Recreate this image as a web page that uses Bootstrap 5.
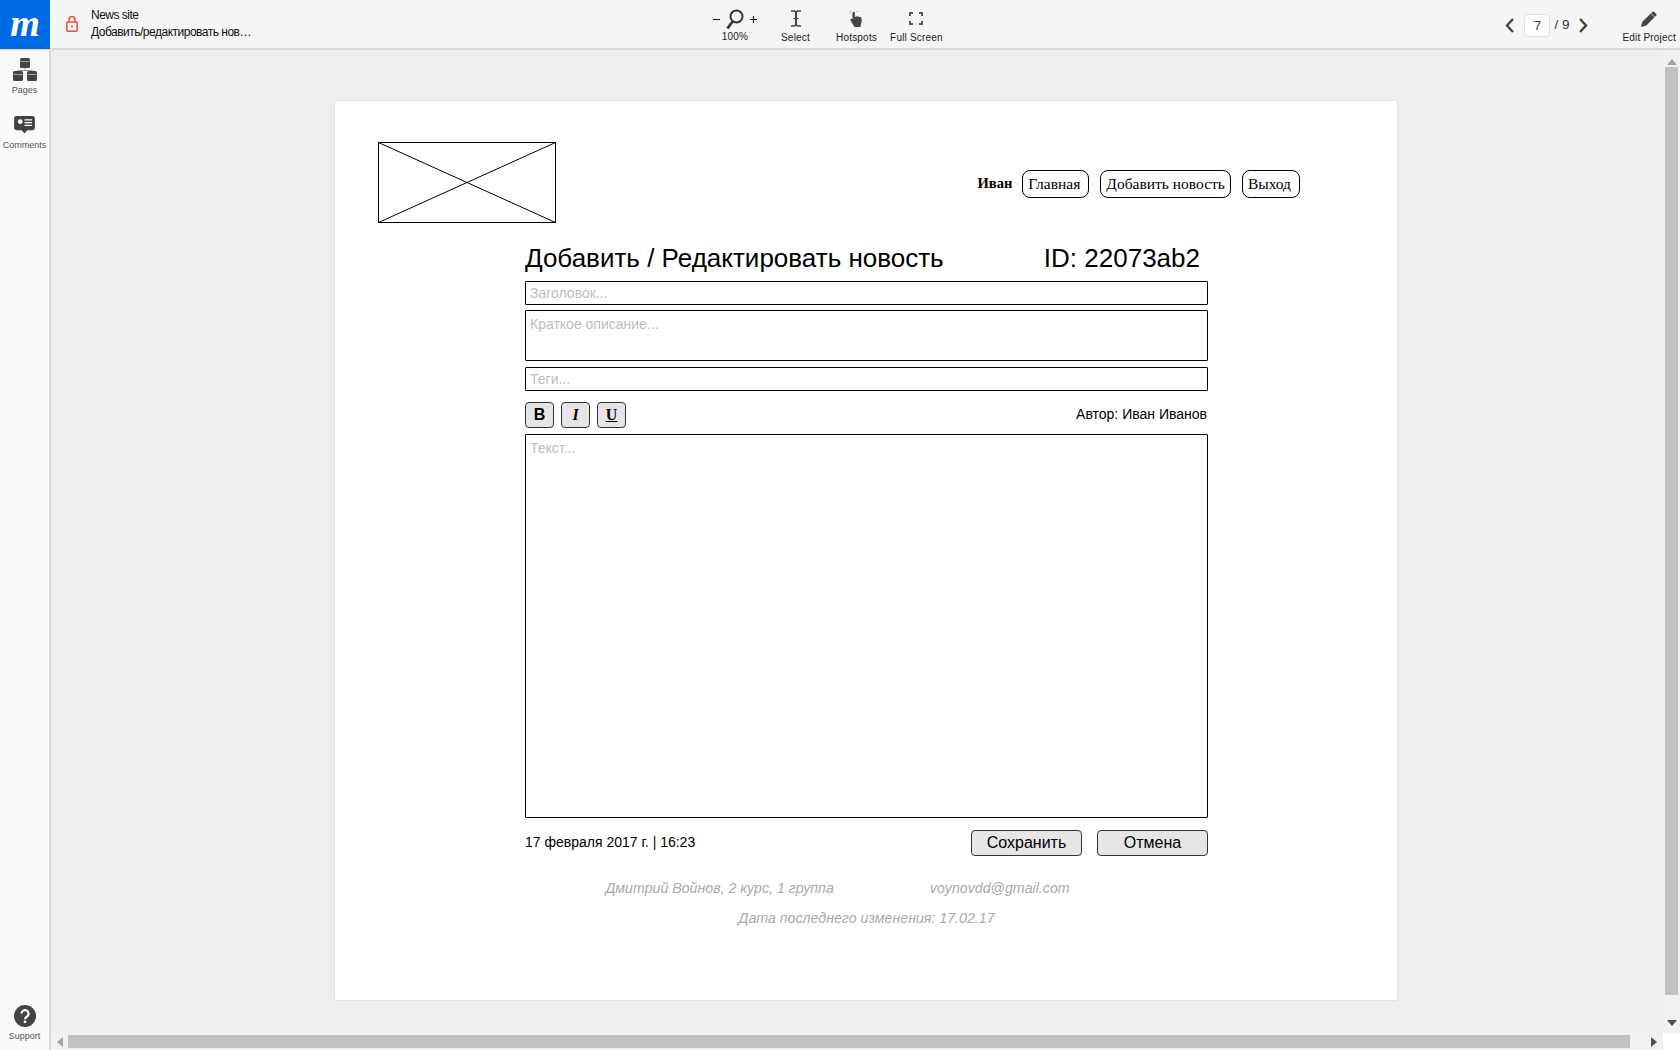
<!DOCTYPE html>
<html lang="en">
<head>
  <meta charset="UTF-8" />
  <title>News site</title>
  <link href="https://cdn.jsdelivr.net/npm/bootstrap@5.3.3/dist/css/bootstrap.min.css" rel="stylesheet" />
  <style>
    html, body { height: 100%; overflow: hidden; }
    body { font-family: "Liberation Sans", Arial, sans-serif; background: #eee; color: #000; }
    svg { display: block; }

    /* player chrome */
    .top-bar { height: 50px; background: #f5f5f5; border-bottom: 2px solid #d9d9d9; }
    .logo-box { width: 50px; height: 49px; background: #0069e4; color: #fff; font: italic bold 38px/40px "Liberation Serif", serif; margin-bottom: -1px; padding-bottom: 4px; }
    .title-block { width: 622px; padding-top: 7px; font-size: 12px; line-height: 17px; letter-spacing: -.5px; color: #111; }
    .lock-icon { margin: 16px 13px 0 16px; }
    .tool { padding-top: 8px; font-size: 10px; line-height: 12px; color: #222; letter-spacing: .2px; text-align: center; }
    .tool-icon { height: 24px; }
    .zoom-icons { height: 23px; gap: 6px; }
    .zoom-tool { margin-right: 24px; }
    .select-tool { margin-right: 26px; }
    .hotspot-tool { margin-right: 13px; }
    .icon-drop { margin-top: 2px; }
    .pager { margin-top: 14px; font-size: 13.5px; color: #333; }
    .page-input { width: 26px; height: 23px; margin: 0 4px 0 10px; background: #fff; border: 1px solid #e2e2e2; border-radius: 4px; line-height: 21px; text-align: center; color: #444; }
    .page-total { margin-right: 10px; }
    .edit-tool { margin-left: 34px; }

    .side-bar { width: 51px; padding-top: 8px; background: #fafafa; border-right: 2px solid #d9d9d9; font-size: 9px; line-height: 11px; color: #555; }
    .comments-icon { margin-top: 20px; }
    .comments-label { margin-top: 6px; }

    .canvas-wrap { min-width: 0; }
    .canvas-area { min-height: 0; }
    .canvas-scroll { min-width: 0; padding: 50px 0 0 283px; }
    .scroll-v { width: 17px; padding-top: 9px; background: #f1f1f1; }
    .scroll-v-thumb { width: 13px; height: 928px; margin: 2px 2px 0; background: #c1c1c1; }
    .scroll-h { height: 17px; padding-left: 6px; background: #f1f1f1; }
    .scroll-h-thumb { height: 13px; background: #c1c1c1; width: 1562px; margin-left: 5px; }
    .scroll-corner { width: 17px; height: 17px; background: #fff; }
    .arrow-up { border: 5px solid transparent; border-top: 0; border-bottom: 6px solid #a3a3a3; }
    .arrow-down { border: 5px solid transparent; border-bottom: 0; border-top: 6px solid #505050; margin-top: auto; margin-bottom: 7px; }
    .arrow-left { border: 5px solid transparent; border-left: 0; border-right: 6px solid #a3a3a3; }
    .arrow-right { border: 5px solid transparent; border-right: 0; border-left: 6px solid #505050; margin-left: auto; margin-right: 6px; }

    /* wireframe */
    .sheet { width: 1064px; height: 901px; border: 1px solid #e3e3e3; border-radius: 2px; padding: 41px 0 0 43px; }
    .sheet-head { width: 922px; height: 81px; }
    .nav-wrap { margin-top: 2px; }
    .nav-name { font-family: "Liberation Serif", serif; font-size: 14.5px; margin-right: 10px; }
    .nav-btn { font-family: "Liberation Serif", serif; font-size: 15.5px; line-height: 26px; height: 28px; padding: 0 5px; border: 1px solid #000; border-radius: 8px; color: #000; background: #fff; }
    .nav-pad { padding-right: 8px; }
    .nav-gap { margin-right: 11px; }
    .form-col { width: 683px; margin-left: 147px; margin-top: 16px; }
    .form-title { font-size: 26px; line-height: 30px; height: 42px; margin: 0; padding-top: 4px; padding-right: 8px; font-weight: 400; }
    .wire-input.form-control { border: 1px solid #000; border-radius: 1px; padding: 0 4px; font-size: 14px; line-height: 20px; height: 24px; color: #000; resize: none; box-shadow: none; }
    .wire-input.form-control::placeholder { color: #bdbdbd; opacity: 1; }
    .wire-input.area-short { height: 51px; margin: 5px 0 6px; padding-top: 3px; }
    .wire-input.area-text { height: 384px; padding-top: 3px; }
    .fmt-row { margin: 11px 0 6px; }
    .fmt-gap { gap: 7px; }
    .fmt-btn { width: 29px; height: 26px; padding: 0; background: #e6e6e6; border: 1px solid #333; border-radius: 4px; color: #000; font-size: 16px; line-height: 24px; }
    .fmt-serif { font-family: "Liberation Serif", serif; font-weight: 700; }
    .act-row { margin-top: 12px; }
    .act-gap { gap: 15px; }
    .act-btn { width: 111px; height: 26px; padding: 0; background: #e6e6e6; border: 1px solid #333; border-radius: 4px; color: #000; font-size: 16px; line-height: 24px; }
    .meta-text { font-size: 14px; line-height: 16px; padding-bottom: 2px; }
    .meta-end { padding-right: 1px; }
    .foot-note { font-size: 14.2px; font-style: italic; color: #aaa; line-height: 16px; }
    .foot-first { padding-right: 58px; }
    .foot-second { margin-top: 14px; }
    .note-gap { margin-right: 96px; }
  </style>
</head>
<body class="d-flex flex-column">

  <header class="top-bar d-flex align-items-start flex-shrink-0">
    <div class="logo-box d-flex align-items-center justify-content-center">m</div>
    <svg class="lock-icon" width="12" height="16" viewBox="0 0 12 16" fill="none" stroke="#e8503a" stroke-width="1.5">
      <path d="M3 6V3.500a3 3 0 0 1 6 0V6"/>
      <rect x=".8" y="6" width="10.400" height="9.200" rx="1"/>
      <circle cx="6" cy="10.500" r="1.100" fill="#e8503a" stroke="none"/>
    </svg>
    <div class="title-block">
      <div>News site</div>
      <div>Добавить/редактировать нов…</div>
    </div>

    <div class="tool zoom-tool d-flex flex-column align-items-center">
      <div class="zoom-icons d-flex align-items-center">
        <svg width="7" height="7" viewBox="0 0 7 7"><path d="M0 3.500h7" stroke="#222" stroke-width="1.200"/></svg>
        <svg width="18" height="21" viewBox="0 0 18 21" fill="none" stroke="#333"><circle cx="10.500" cy="7.500" r="6" stroke-width="2"/><path d="M6.500 12.500 1.500 19.500" stroke-width="2.600"/></svg>
        <svg width="7" height="7" viewBox="0 0 7 7"><path d="M0 3.500h7M3.500 0v7" stroke="#222" stroke-width="1.200"/></svg>
      </div>
      <div>100%</div>
    </div>
    <div class="tool select-tool">
      <div class="tool-icon d-flex justify-content-center">
        <svg class="icon-drop" width="10" height="17" viewBox="0 0 10 17" fill="none" stroke="#444"><path d="M0 1h3.500L5 2.200 6.500 1H10M0 16h3.500L5 14.800 6.500 16H10" stroke-width="1.600"/><path d="M5 2v13" stroke-width="2"/><path d="M2.500 8.500h5" stroke-width="1.200"/></svg>
      </div>
      <div>Select</div>
    </div>
    <div class="tool hotspot-tool">
      <div class="tool-icon d-flex justify-content-center">
        <svg class="icon-drop" width="15" height="17" viewBox="0 0 15 17"><path d="M3.500 3a1.200 1.200 0 0 1 2.400 0v4l1-.3c.3-.6 1.500-.6 1.900.1.500-.4 1.500-.3 1.800.3.600-.2 1.600.1 1.800.9.500 2 .4 4.200-.6 6.500L11.500 17H5.500L1.500 10.500c-.8-1.300.8-2.500 2-1.300z" fill="#444"/><path d="M1 3.500a3.500 3.500 0 0 1 7-1.500" fill="none" stroke="#888" stroke-width="1" stroke-dasharray="1 1"/></svg>
      </div>
      <div>Hotspots</div>
    </div>
    <div class="tool">
      <div class="tool-icon d-flex justify-content-center">
        <svg class="mt-1" width="14" height="13" viewBox="0 0 14 13" fill="none" stroke="#555" stroke-width="2"><path d="M1 4V1h3M10 1h3v3M13 9v3h-3M4 12H1V9"/></svg>
      </div>
      <div>Full Screen</div>
    </div>

    <div class="pager d-flex align-items-center ms-auto">
      <svg width="9" height="15" viewBox="0 0 9 15" fill="none" stroke="#444" stroke-width="2.400"><path d="M8 1 2 7.500 8 14"/></svg>
      <div class="page-input">7</div>
      <div class="page-total">/ 9</div>
      <svg width="9" height="15" viewBox="0 0 9 15" fill="none" stroke="#444" stroke-width="2.400"><path d="M1 1l6 6.500L1 14"/></svg>
    </div>
    <div class="tool edit-tool d-flex flex-column align-items-center me-1">
      <div class="tool-icon">
        <svg class="icon-drop" width="18" height="18" viewBox="0 0 18 18"><path d="M1 17l1.200-5L12.500 1.700a1 1 0 0 1 1.400 0l2.400 2.400a1 1 0 0 1 0 1.400L6 15.800z" fill="#444"/><path d="M11 3.500l3.500 3.500" stroke="#f5f5f5" stroke-width=".8"/></svg>
      </div>
      <div>Edit Project</div>
    </div>
  </header>

  <div class="d-flex flex-grow-1 canvas-area">
    <aside class="side-bar d-flex flex-column align-items-center flex-shrink-0">
      <svg width="24" height="23" viewBox="0 0 24 23" fill="#444">
        <rect x="7" y="0" width="10" height="10" rx="1.500"/>
        <path d="M12 10v2.500M4.500 14v-1.500h15V14" fill="none" stroke="#999"/>
        <rect x="0" y="13" width="10" height="10" rx="1.500"/>
        <rect x="14" y="13" width="10" height="10" rx="1.500"/>
        <path d="M7 3.500h10M0 16.500h10M14 16.500h10" stroke="#ccc" stroke-width=".7"/>
      </svg>
      <div class="mt-1">Pages</div>
      <svg class="comments-icon" width="21" height="18" viewBox="0 0 22 19">
        <path d="M2.500 0h17A2.500 2.500 0 0 1 22 2.500v10a2.500 2.500 0 0 1-2.500 2.500H14l-3 3.500L8 15H2.500A2.500 2.500 0 0 1 0 12.500v-10A2.500 2.500 0 0 1 2.500 0z" fill="#444"/>
        <circle cx="6.500" cy="6" r="2.500" fill="#fff"/>
        <path d="M11 4h8M11 7h8M11 10h8" stroke="#fff" stroke-width="1.300"/>
      </svg>
      <div class="comments-label">Comments</div>
      <svg class="mt-auto" width="22" height="22" viewBox="0 0 22 22">
        <circle cx="11" cy="11" r="11" fill="#444"/>
        <path d="M7.500 8.500a3.500 3.500 0 1 1 5.500 3c-1.400.9-2 1.400-2 2.800" fill="none" stroke="#fff" stroke-width="2.200"/>
        <rect x="9.800" y="15.500" width="2.400" height="2.500" fill="#fff"/>
      </svg>
      <div class="mt-1 mb-2">Support</div>
    </aside>

    <div class="canvas-wrap d-flex flex-column flex-grow-1">
      <div class="d-flex flex-grow-1 canvas-area">
        <main class="canvas-scroll flex-grow-1">
          <div class="card sheet">
            <div class="sheet-head d-flex justify-content-between align-items-center">
              <svg width="178" height="81" viewBox="0 0 178 81" fill="none" stroke="#000">
                <rect x=".5" y=".5" width="177" height="80"/>
                <path d="M.5 .5 177.500 80.500M177.500 .5 .5 80.500"/>
              </svg>
              <nav class="nav-wrap d-flex align-items-center">
                <span class="nav-name fw-bold">Иван</span>
                <a class="nav-btn nav-pad nav-gap text-decoration-none d-block">Главная</a>
                <a class="nav-btn nav-gap text-decoration-none d-block">Добавить новость</a>
                <a class="nav-btn nav-pad text-decoration-none d-block">Выход</a>
              </nav>
            </div>

            <div class="form-col">
              <div class="form-title d-flex justify-content-between">
                <span>Добавить / Редактировать новость</span>
                <span>ID: 22073ab2</span>
              </div>
              <input class="form-control wire-input" placeholder="Заголовок..." />
              <textarea class="form-control wire-input area-short" placeholder="Краткое описание..."></textarea>
              <input class="form-control wire-input" placeholder="Теги..." />
              <div class="fmt-row d-flex align-items-center justify-content-between">
                <div class="fmt-gap d-flex">
                  <button class="btn fmt-btn fw-bold">B</button>
                  <button class="btn fmt-btn fmt-serif fst-italic">I</button>
                  <button class="btn fmt-btn fmt-serif text-decoration-underline">U</button>
                </div>
                <div class="meta-text meta-end">Автор: Иван Иванов</div>
              </div>
              <textarea class="form-control wire-input area-text" placeholder="Текст..."></textarea>
              <div class="act-row d-flex align-items-center justify-content-between">
                <div class="meta-text">17 февраля 2017 г. | 16:23</div>
                <div class="act-gap d-flex">
                  <button class="btn act-btn">Сохранить</button>
                  <button class="btn act-btn">Отмена</button>
                </div>
              </div>
              <div class="foot-note foot-first d-flex justify-content-center mt-4">
                <span class="note-gap">Дмитрий Войнов, 2 курс, 1 группа</span>
                <span>voynovdd@gmail.com</span>
              </div>
              <div class="foot-note foot-second text-center">Дата последнего изменения: 17.02.17</div>
            </div>
          </div>
        </main>
        <div class="scroll-v d-flex flex-column align-items-center flex-shrink-0">
          <div class="arrow-up"></div>
          <div class="scroll-v-thumb"></div>
          <div class="arrow-down"></div>
        </div>
      </div>
      <div class="d-flex flex-shrink-0">
        <div class="scroll-h d-flex align-items-center flex-grow-1">
          <div class="arrow-left"></div>
          <div class="scroll-h-thumb"></div>
          <div class="arrow-right"></div>
        </div>
        <div class="scroll-corner"></div>
      </div>
    </div>
  </div>

</body>
</html>
